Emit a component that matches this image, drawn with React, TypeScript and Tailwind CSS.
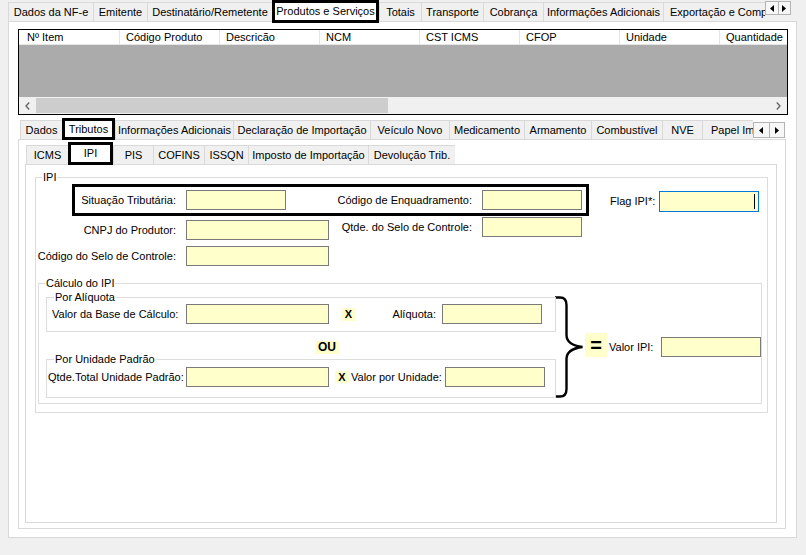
import React from "react";

type TabDef = { label: string; w: string; sel?: boolean; clip?: string };

const topTabs: TabDef[] = [
  { label: "Dados da NF-e", w: "w-[85px]" },
  { label: "Emitente", w: "w-[54px]" },
  { label: "Destinatário/Remetente", w: "w-[125px]" },
  { label: "Produtos e Serviços", w: "w-[107px]", sel: true },
  { label: "Totais", w: "w-[42px]" },
  { label: "Transporte", w: "w-[62px]" },
  { label: "Cobrança", w: "w-[60px]" },
  { label: "Informações Adicionais", w: "w-[120px]" },
  { label: "Exportação e Compras", w: "w-[102px]", clip: "pl-[6px]" },
];

const itemTabs: TabDef[] = [
  { label: "Dados", w: "w-[42px]" },
  { label: "Tributos", w: "w-[53px]", sel: true },
  { label: "Informações Adicionais", w: "w-[118px]" },
  { label: "Declaração de Importação", w: "w-[137px]" },
  { label: "Veículo Novo", w: "w-[79px]" },
  { label: "Medicamento", w: "w-[75px]" },
  { label: "Armamento", w: "w-[67px]" },
  { label: "Combustível", w: "w-[71px]" },
  { label: "NVE", w: "w-[40px]" },
  { label: "Papel Imune", w: "w-[51px]", clip: "pl-[8px]" },
];

const taxTabs: TabDef[] = [
  { label: "ICMS", w: "w-[42px]" },
  { label: "IPI", w: "w-[45px]", sel: true },
  { label: "PIS", w: "w-[40px]" },
  { label: "COFINS", w: "w-[51px]" },
  { label: "ISSQN", w: "w-[44px]" },
  { label: "Imposto de Importação", w: "w-[120px]" },
  { label: "Devolução Trib.", w: "w-[87px]" },
];

const columns = ["Código Produto", "Descricão", "NCM", "CST ICMS", "CFOP", "Unidade", "Quantidade"];

function TabRow({ tabs, unsel, sel }: { tabs: TabDef[]; unsel: string; sel: string }) {
  return (
    <>
      {tabs.map((t) =>
        t.sel ? (
          <div
            key={t.label}
            className={`${t.w} ${sel} shrink-0 relative z-10 border-[3px] border-black bg-white flex items-center justify-center whitespace-nowrap`}
          >
            {t.label}
          </div>
        ) : (
          <div
            key={t.label}
            className={`${t.w} ${unsel} shrink-0 border-t border-l border-[#d9d9d9] bg-[#f0f0f0] flex items-center whitespace-nowrap ${
              t.clip ? `overflow-hidden justify-start ${t.clip}` : "justify-center"
            }`}
          >
            {t.label}
          </div>
        )
      )}
    </>
  );
}

function Scroller({ cls }: { cls: string }) {
  return (
    <div className={`flex shrink-0 ${cls}`}>
      <div className="flex-1 border border-[#b4b4b4] bg-[#f7f7f7] flex items-center justify-center">
        <svg width="4" height="7" viewBox="0 0 4 7">
          <path d="M4 0 L0 3.5 L4 7 Z" fill="#000" />
        </svg>
      </div>
      <div className="flex-1 border border-l-0 border-[#b4b4b4] bg-[#f7f7f7] flex items-center justify-center">
        <svg width="4" height="7" viewBox="0 0 4 7">
          <path d="M0 0 L4 3.5 L0 7 Z" fill="#000" />
        </svg>
      </div>
    </div>
  );
}

function Chevron({ dir }: { dir: "l" | "r" }) {
  return (
    <svg width="5" height="8" viewBox="0 0 5 8">
      <polyline
        points={dir === "l" ? "4.2,0.5 1,4 4.2,7.5" : "0.8,0.5 4,4 0.8,7.5"}
        fill="none"
        stroke="#606060"
        strokeWidth="1.3"
      />
    </svg>
  );
}

function Grid() {
  return (
    <div className="ml-[9px] mt-[7px] w-[770px] h-[86px] border border-black flex flex-col">
      <div className="h-[15px] flex bg-white border-b border-[#e5e5e5] overflow-hidden">
        <div className="w-[101px] shrink-0 border-r border-[#e5e5e5] pl-[8px] flex items-center">Nº Item</div>
        {columns.map((c) => (
          <div key={c} className="w-[100px] shrink-0 border-r border-[#e5e5e5] pl-[6px] flex items-center whitespace-nowrap">
            {c}
          </div>
        ))}
      </div>
      <div className="h-[52px] bg-[#ababab]" />
      <div className="h-[17px] flex items-center bg-[#f0f0f0]">
        <div className="w-[17px] flex justify-center">
          <Chevron dir="l" />
        </div>
        <div className="w-[352px] h-[15px] bg-[#cdcdcd]" />
        <div className="flex-1" />
        <div className="w-[17px] flex justify-center">
          <Chevron dir="r" />
        </div>
      </div>
    </div>
  );
}

function Input({ w, mt = "" }: { w: string; mt?: string }) {
  return <div className={`${w} ${mt} h-[20px] shrink-0 bg-[#ffffcc] border border-[#7a7a7a]`} />;
}

function Group({ label, cls, lpos, children }: { label: string; cls: string; lpos: string; children?: React.ReactNode }) {
  return (
    <div className={`relative border border-[#dcdcdc] ${cls}`}>
      <span className={`absolute -top-[7px] ${lpos} px-[1px] bg-white leading-[13px] whitespace-nowrap`}>{label}</span>
      {children}
    </div>
  );
}

function Badge({ cls, children }: { cls: string; children: React.ReactNode }) {
  return <div className={`shrink-0 bg-[#ffffcc] font-bold flex items-center justify-center ${cls}`}>{children}</div>;
}

function IpiForm() {
  return (
    <Group label="IPI" cls="ml-[9px] mt-[12px] w-[733px] h-[236px]" lpos="left-[6px]">
      {/* linha 1 */}
      <div className="flex items-start mt-[6px]">
        <div className="ml-[36px] w-[517px] h-[32px] border-[3px] border-black flex items-center">
          <div className="w-[101px] text-right whitespace-nowrap">Situação Tributária:</div>
          <Input w="w-[100px] ml-[10px]" />
          <div className="w-[186px] text-right whitespace-nowrap">Código de Enquadramento:</div>
          <Input w="w-[100px] ml-[10px]" />
        </div>
        <div className="flex items-center mt-[7px]">
          <span className="ml-[21px] whitespace-nowrap">Flag IPI*:</span>
          <div className="ml-[4px] w-[100px] h-[21px] bg-[#ffffcc] border border-[#0078d7] flex items-center justify-end pr-[3px]">
            <span className="w-px h-[15px] bg-black" />
          </div>
        </div>
      </div>
      {/* linha 2 */}
      <div className="flex items-start">
        <div className="flex items-center mt-[4px]">
          <div className="w-[140px] text-right whitespace-nowrap">CNPJ do Produtor:</div>
          <Input w="w-[143px] ml-[10px]" />
        </div>
        <div className="flex items-center mt-[1px]">
          <div className="w-[143px] text-right whitespace-nowrap">Qtde. do Selo de Controle:</div>
          <Input w="w-[100px] ml-[10px]" />
        </div>
      </div>
      {/* linha 3 */}
      <div className="flex items-center mt-[6px]">
        <div className="w-[140px] text-right whitespace-nowrap">Código do Selo de Controle:</div>
        <Input w="w-[143px] ml-[10px]" />
      </div>

      <Group label="Cálculo do IPI" cls="ml-[2px] mt-[17px] w-[724px] h-[121px]" lpos="left-[6px]">
        <div className="flex items-start">
          <div className="ml-[7px] mt-[13px] w-[510px] shrink-0">
            <Group label="Por Alíquota" cls="h-[35px]" lpos="left-[7px]">
              <div className="flex items-center mt-[6px]">
                <div className="ml-[5px] w-[134px] whitespace-nowrap">Valor da Base de Cálculo:</div>
                <Input w="w-[143px]" />
                <Badge cls="ml-[12px] w-[15px] h-[13px]">X</Badge>
                <div className="w-[86px] text-right pr-[6px]">Alíquota:</div>
                <Input w="w-[100px]" />
              </div>
            </Group>
            <Badge cls="ml-[269px] mt-[9px] w-[24px] h-[13px] text-[12px]">OU</Badge>
            <Group label="Por Unidade Padrão" cls="mt-[5px] h-[39px]" lpos="left-[7px]">
              <div className="flex items-center mt-[7px]">
                <div className="ml-[1px] w-[138px] whitespace-nowrap">Qtde.Total Unidade Padrão:</div>
                <Input w="w-[143px]" />
                <Badge cls="ml-[6px] w-[14px] h-[12px]">X</Badge>
                <div className="ml-[2px] w-[94px] whitespace-nowrap">Valor por Unidade:</div>
                <Input w="w-[100px]" />
              </div>
            </Group>
          </div>
          <svg className="-ml-[1px] mt-[12px] shrink-0" width="29" height="102" viewBox="0 0 29 102">
            <path
              d="M0 1.5 H5 Q11.5 1.5 11.5 9 V39 Q11.5 49 27.5 51 Q11.5 53 11.5 63 V93 Q11.5 100.5 5 100.5 H0"
              fill="none"
              stroke="#000"
              strokeWidth="2.4"
            />
          </svg>
          <Badge cls="ml-[1px] mt-[49px] w-[22px] h-[24px] text-[20px] leading-none">=</Badge>
          <div className="flex items-center mt-[53px] shrink-0">
            <span className="ml-[2px] whitespace-nowrap">Valor IPI:</span>
            <Input w="w-[100px] ml-[8px]" />
          </div>
        </div>
      </Group>
    </Group>
  );
}

export default function App() {
  return (
    <div className="w-[806px] h-[555px] bg-[#f0f0f0] overflow-hidden font-['Liberation_Sans',Arial,sans-serif] text-[11px] leading-[13px] text-black">
      {/* abas da NF-e */}
      <div className="h-[21px] flex items-start pl-[8px]">
        <TabRow tabs={topTabs} unsel="mt-[2px] h-[19px]" sel="h-[23px]" />
        <Scroller cls="w-[26px] h-[14px] mt-[1px]" />
      </div>
      <div className="ml-[8px] w-[789px] h-[517px] border border-[#d9d9d9] bg-white">
        <Grid />

        {/* abas do item */}
        <div className="ml-[9px] mt-[3px] w-[768px]">
          <div className="h-[21px] flex items-start pl-[2px]">
            <TabRow tabs={itemTabs} unsel="mt-[2px] h-[19px]" sel="h-[22px]" />
            <Scroller cls="w-[32px] h-[16px] mt-[4px]" />
          </div>
          <div className="h-[390px] border border-[#d9d9d9] bg-white">
            {/* abas de tributos */}
            <div className="h-[22px] mt-[2px] flex items-start pl-[7px]">
              <TabRow tabs={taxTabs} unsel="mt-[3px] h-[19px]" sel="h-[23px]" />
            </div>
            <div className="ml-[6px] w-[752px] h-[359px] border border-[#d9d9d9] bg-white">
              <IpiForm />
            </div>
          </div>
        </div>
      </div>
    </div>
  );
}
